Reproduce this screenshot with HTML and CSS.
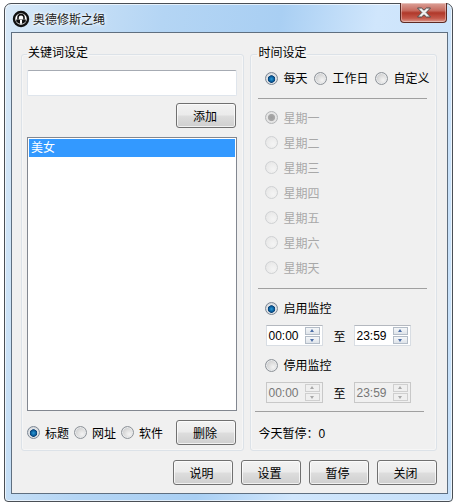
FILE: index.html
```html
<!DOCTYPE html>
<html lang="zh">
<head>
<meta charset="utf-8">
<title>奥德修斯之绳</title>
<link rel="stylesheet" href="styles.css">
</head>
<body>
<div class="window">
  <div class="titlebar">
    <svg class="app-icon" width="18" height="18" viewBox="0 0 18 18">
      <circle cx="9" cy="9" r="7" fill="#fff" stroke="#111" stroke-width="2.4"/>
      <path d="M4.200 9.400h9.600v2.200a6 6 0 0 1-9.600 0z" fill="#111"/>
      <path d="M6 9.600V7.600a3 3 0 0 1 6 0v2" fill="none" stroke="#111" stroke-width="1.600"/>
      <rect x="8" y="9.800" width="2" height="4" fill="#fff"/>
    </svg>
    <span class="title">奥德修斯之绳</span>
    <div class="close">
      <svg width="16" height="11" viewBox="0 0 16 11">
        <path d="M1.500 1h4l2.500 2.200L10.500 1h4l-4.300 4.500L14.500 10h-4L8 7.800 5.500 10h-4l4.300-4.500z" fill="#f1f1f1" stroke="#4c4c4c" stroke-width="1"/>
      </svg>
    </div>
  </div>
  <div class="client">
    <div class="groups">
      <fieldset class="group group-keys">
        <legend>关键词设定</legend>
        <input class="text-input" type="text">
        <div class="add-row"><button class="btn">添加</button></div>
        <div class="list"><div class="list-item">美女</div></div>
        <div class="type-row">
          <div class="radios">
            <label class="opt"><span class="radio on"></span>标题</label>
            <label class="opt"><span class="radio"></span>网址</label>
            <label class="opt"><span class="radio"></span>软件</label>
          </div>
          <button class="btn">删除</button>
        </div>
      </fieldset>
      <fieldset class="group group-time">
        <legend>时间设定</legend>
        <div class="mode-row">
          <label class="opt"><span class="radio on"></span>每天</label>
          <label class="opt"><span class="radio"></span>工作日</label>
          <label class="opt"><span class="radio"></span>自定义</label>
        </div>
        <div class="sep sep-mode"></div>
        <div class="days">
          <label class="opt day"><span class="radio off-on"></span>星期一</label>
          <label class="opt day"><span class="radio off"></span>星期二</label>
          <label class="opt day"><span class="radio off"></span>星期三</label>
          <label class="opt day"><span class="radio off"></span>星期四</label>
          <label class="opt day"><span class="radio off"></span>星期五</label>
          <label class="opt day"><span class="radio off"></span>星期六</label>
          <label class="opt day"><span class="radio off"></span>星期天</label>
        </div>
        <div class="sep sep-days"></div>
        <label class="opt monitor"><span class="radio on"></span>启用监控</label>
        <div class="range">
          <div class="spin"><span class="time">00:00</span><span class="arrows"><i class="up"></i><i class="down"></i></span></div>
          <span class="to">至</span>
          <div class="spin"><span class="time">23:59</span><span class="arrows"><i class="up"></i><i class="down"></i></span></div>
        </div>
        <label class="opt monitor"><span class="radio"></span>停用监控</label>
        <div class="range disabled">
          <div class="spin"><span class="time">00:00</span><span class="arrows"><i class="up"></i><i class="down"></i></span></div>
          <span class="to">至</span>
          <div class="spin"><span class="time">23:59</span><span class="arrows"><i class="up"></i><i class="down"></i></span></div>
        </div>
        <div class="sep sep-range"></div>
        <div class="status">今天暂停：<span class="count">0</span></div>
      </fieldset>
    </div>
    <div class="footer">
      <button class="btn">说明</button>
      <button class="btn">设置</button>
      <button class="btn">暂停</button>
      <button class="btn">关闭</button>
    </div>
  </div>
</div>
</body>
</html>
```
FILE: styles.css
```css
* { box-sizing: border-box; }
html, body { margin: 0; padding: 0; background: #fff; }
body {
  width: 458px;
  height: 504px;
  overflow: hidden;
  font: 12px/16px "Noto Sans CJK SC", "Liberation Sans", sans-serif;
  color: #000;
}
.window {
  position: relative;
  width: 449px;
  height: 499px;
  margin: 3px 0 0 4px;
  padding: 0 4px 7px 6px;
  display: flex;
  flex-direction: column;
  border: 1px solid #4a4f55;
  border-radius: 7px 7px 4px 4px;
  background: linear-gradient(100deg, #d8e9f8 0%, #b4d5f4 30%, #a9cff3 52%, #d0e6fc 70%, #c6e0f9 100%);
  box-shadow: inset 0 0 0 1px rgba(255,255,255,.65);
}
.titlebar {
  flex: none;
  height: 28px;
  display: flex;
  align-items: center;
  padding: 1px 0 0 1px;
}
.app-icon { flex: none; }
.title {
  margin-left: 3px;
  color: #222;
  text-shadow: 0 0 5px #fff, 0 0 3px #fff;
}
.close {
  position: absolute;
  top: -1px;
  right: 5px;
  width: 47px;
  height: 20px;
  display: flex;
  align-items: center;
  justify-content: center;
  border: 1px solid #5d2a24;
  border-top: 0;
  border-radius: 0 0 4px 4px;
  background: linear-gradient(#dca198 0%, #c66a5e 40%, #b0382a 52%, #c4584a 80%, #dc9a8e 100%);
  box-shadow: inset 0 0 0 1px rgba(255,255,255,.35);
}
.close svg { display: block; }
.client {
  flex: 1;
  display: flex;
  flex-direction: column;
  padding: 13px 10px 0 9px;
  border: 1px solid #5f6f80;
  background: #f0f0f0;
}
.groups {
  display: flex;
  gap: 6px;
  height: 405px;
}
.group {
  margin: 0;
  min-width: 0;
  min-inline-size: 0;
  border: 1px solid #dce2e8;
  border-radius: 3px;
  box-shadow: inset 0 0 0 1px #f6f6f6;
}
.group legend {
  padding: 0 1px 4px;
  line-height: 12px;
  color: #000;
}
.group-keys {
  width: 224px;
  padding: 8px 7px 0 5px;
}
.group-keys legend { margin-left: 0; }
.group-time {
  width: 187px;
  padding: 8px 9px 0 7px;
}
.group-time legend { margin-left: -1px; }
.text-input {
  display: block;
  width: 210px;
  height: 26px;
  margin: 0;
  padding: 0 3px;
  border: 1px solid #dfe5ec;
  border-top-color: #a6abb3;
  border-radius: 2px;
  background: #fff;
  outline: 0;
}
.add-row {
  display: flex;
  justify-content: flex-end;
  margin: 7px 0 0 0;
}
.btn {
  width: 60px;
  height: 25px;
  margin: 0;
  padding: 0 3px 0 0;
  border: 1px solid #707070;
  border-radius: 3px;
  font: inherit;
  color: #000;
  background: linear-gradient(#f2f2f2 0%, #ebebeb 48%, #dddddd 52%, #cfcfcf 100%);
  box-shadow: inset 0 0 0 1px rgba(255,255,255,.7);
}
.list {
  width: 210px;
  height: 274px;
  margin-top: 9px;
  padding: 1px;
  border: 1px solid #828790;
  background: #fff;
}
.list-item {
  height: 18px;
  padding-left: 2px;
  line-height: 16px;
  color: #fff;
  background: #3399ff;
}
.type-row {
  display: flex;
  align-items: center;
  justify-content: space-between;
  margin: 9px 0 0 0;
}
.radios { display: flex; gap: 5px; }
.opt {
  display: flex;
  align-items: center;
  height: 16px;
  white-space: nowrap;
}
.radio {
  flex: none;
  width: 13px;
  height: 13px;
  margin-right: 5px;
  border: 1px solid #8e9399;
  border-radius: 50%;
  background: radial-gradient(circle at 65% 65%, #f4f4f4 0%, #d8d8d8 55%, #b0b4b9 100%);
  box-shadow: inset 0 0 0 1px #e8eaec;
}
.radio.on {
  border-color: #7c8794;
  background: radial-gradient(circle at 50% 55%, #2b9ad6 0%, #0a5f9e 30%, #0a3f73 42%, #e5e8eb 50%, #b9bdc2 100%);
  box-shadow: none;
}
.radio.off {
  border-color: #cfd1d3;
  background: radial-gradient(circle at 65% 65%, #f4f4f4 0%, #e9e9e9 70%, #dedede 100%);
  box-shadow: none;
}
.radio.off-on {
  border-color: #b4b6b8;
  background: radial-gradient(circle at 50% 50%, #9e9e9e 0%, #a8a8a8 40%, #e6e6e6 52%, #dcdcdc 100%);
  box-shadow: none;
}
.mode-row {
  display: flex;
  gap: 7px;
  margin-left: 7px;
}
.sep { height: 1px; background: #a0a0a0; }
.sep-mode { margin-top: 12px; }
.days {
  display: flex;
  flex-direction: column;
  margin: 6px 0 0 7px;
}
.day { height: 25px; color: #a8a8a8; }
.sep-days { margin-top: 8px; }
.monitor { margin: 11px 0 0 7px; }
.range {
  display: flex;
  align-items: center;
  height: 21px;
  margin: 9px 0 0 8px;
}
.to { margin: 0 9px 0 10px; }
.spin {
  display: flex;
  align-items: center;
  justify-content: space-between;
  width: 57px;
  height: 21px;
  padding: 0 1px 0 1px;
  border: 1px solid #d8dde3;
  border-top-color: #b4b8bf;
  background: #fff;
}
.time {
  font: 12px/16px "Liberation Sans", sans-serif;
  color: #000;
}
.arrows {
  display: flex;
  flex-direction: column;
  gap: 1px;
  width: 15px;
  margin-right: 1px;
}
.arrows i {
  position: relative;
  display: block;
  height: 8px;
  border: 1px solid #b3bcc7;
  background: linear-gradient(#f5f7f9, #dfe4ea);
}
.arrows i::after {
  content: "";
  position: absolute;
  left: 4px;
  border-left: 2px solid transparent;
  border-right: 2px solid transparent;
}
.arrows .up::after { top: 1px; border-bottom: 3px solid #4d6fa8; }
.arrows .down::after { top: 2px; border-top: 3px solid #4d6fa8; }
.disabled .spin { background: #f0f0f0; border-color: #c8c8c8; }
.disabled .time { color: #777; }
.disabled .arrows i { border-color: #cfcfcf; background: #efefef; }
.disabled .arrows .up::after { border-bottom-color: #a8a8a8; }
.disabled .arrows .down::after { border-top-color: #a8a8a8; }
.sep-range { margin: 8px 3px 0 -3px; }
.status { margin-top: 13px; }
.count { font-family: "Liberation Sans", sans-serif; }
.footer {
  display: flex;
  justify-content: flex-end;
  gap: 8px;
  margin-top: 9px;
}
```
